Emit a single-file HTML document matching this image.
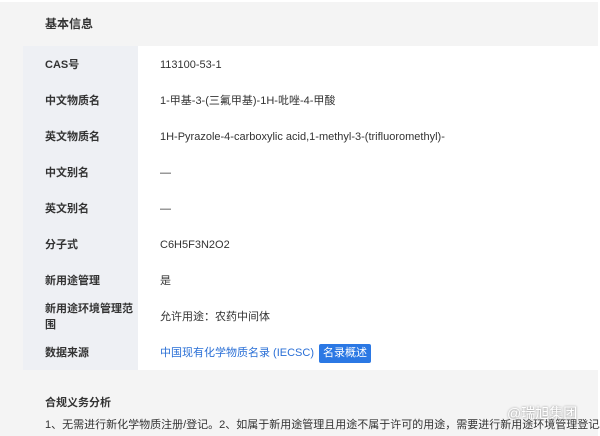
<!DOCTYPE html>
<html><head><meta charset="utf-8"><style>
body{margin:0;width:600px;height:436px;background:#fff;font-family:"Liberation Sans","Noto Sans CJK SC",sans-serif;overflow:hidden;position:relative}
.bg{position:absolute;left:0;top:2px;width:598px;height:434px;background:#f4f4f4}
.t{position:absolute;left:45px;top:15px;font-size:12px;font-weight:bold;color:#333}
.tbl{position:absolute;left:23px;top:46px;width:577px;height:324px;background:#fff}
.lab{position:absolute;left:23px;top:46px;width:115px;height:324px;background:#eef0f4}
.r{position:absolute;left:45px;font-size:11px;height:36px;line-height:38px}
.k{font-weight:bold;color:#333;width:90px}
.v{position:absolute;left:160px;font-size:11px;color:#333;height:36px;line-height:38px;white-space:nowrap}
a{color:#2a6fd6;text-decoration:none}
.tag{display:inline-block;background:#2b78e4;color:#fff;padding:0 4px;line-height:19px;margin-left:5px;font-size:11px;border-radius:2px}
.h2{position:absolute;left:45px;top:394px;font-size:11px;font-weight:bold;color:#333}
.p{position:absolute;left:45px;top:416px;font-size:11px;color:#333;white-space:nowrap}
.wm{position:absolute;left:507px;top:403px;font-size:14px;color:#fff;text-shadow:0 0 2px #888}
</style></head><body>
<div class="bg"></div>
<div class="t">基本信息</div>
<div class="tbl"></div><div class="lab"></div>
<div class="r k" style="top:46px">CAS号</div><div class="v" style="top:46px">113100-53-1</div>
<div class="r k" style="top:82px">中文物质名</div><div class="v" style="top:82px">1-甲基-3-(三氟甲基)-1H-吡唑-4-甲酸</div>
<div class="r k" style="top:118px">英文物质名</div><div class="v" style="top:118px">1H-Pyrazole-4-carboxylic acid,1-methyl-3-(trifluoromethyl)-</div>
<div class="r k" style="top:154px">中文别名</div><div class="v" style="top:154px">—</div>
<div class="r k" style="top:190px">英文别名</div><div class="v" style="top:190px">—</div>
<div class="r k" style="top:226px">分子式</div><div class="v" style="top:226px">C6H5F3N2O2</div>
<div class="r k" style="top:262px">新用途管理</div><div class="v" style="top:262px">是</div>
<div class="r k" style="top:301px;line-height:16px;height:32px">新用途环境管理范围</div><div class="v" style="top:298px">允许用途：农药中间体</div>
<div class="r k" style="top:334px">数据来源</div><div class="v" style="top:334px"><a>中国现有化学物质名录 (IECSC)</a><span class="tag">名录概述</span></div>
<div class="h2">合规义务分析</div>
<div class="p">1、无需进行新化学物质注册/登记。2、如属于新用途管理且用途不属于许可的用途，需要进行新用途环境管理登记。</div>
<div class="wm">@瑞旭集团</div>
</body></html>
